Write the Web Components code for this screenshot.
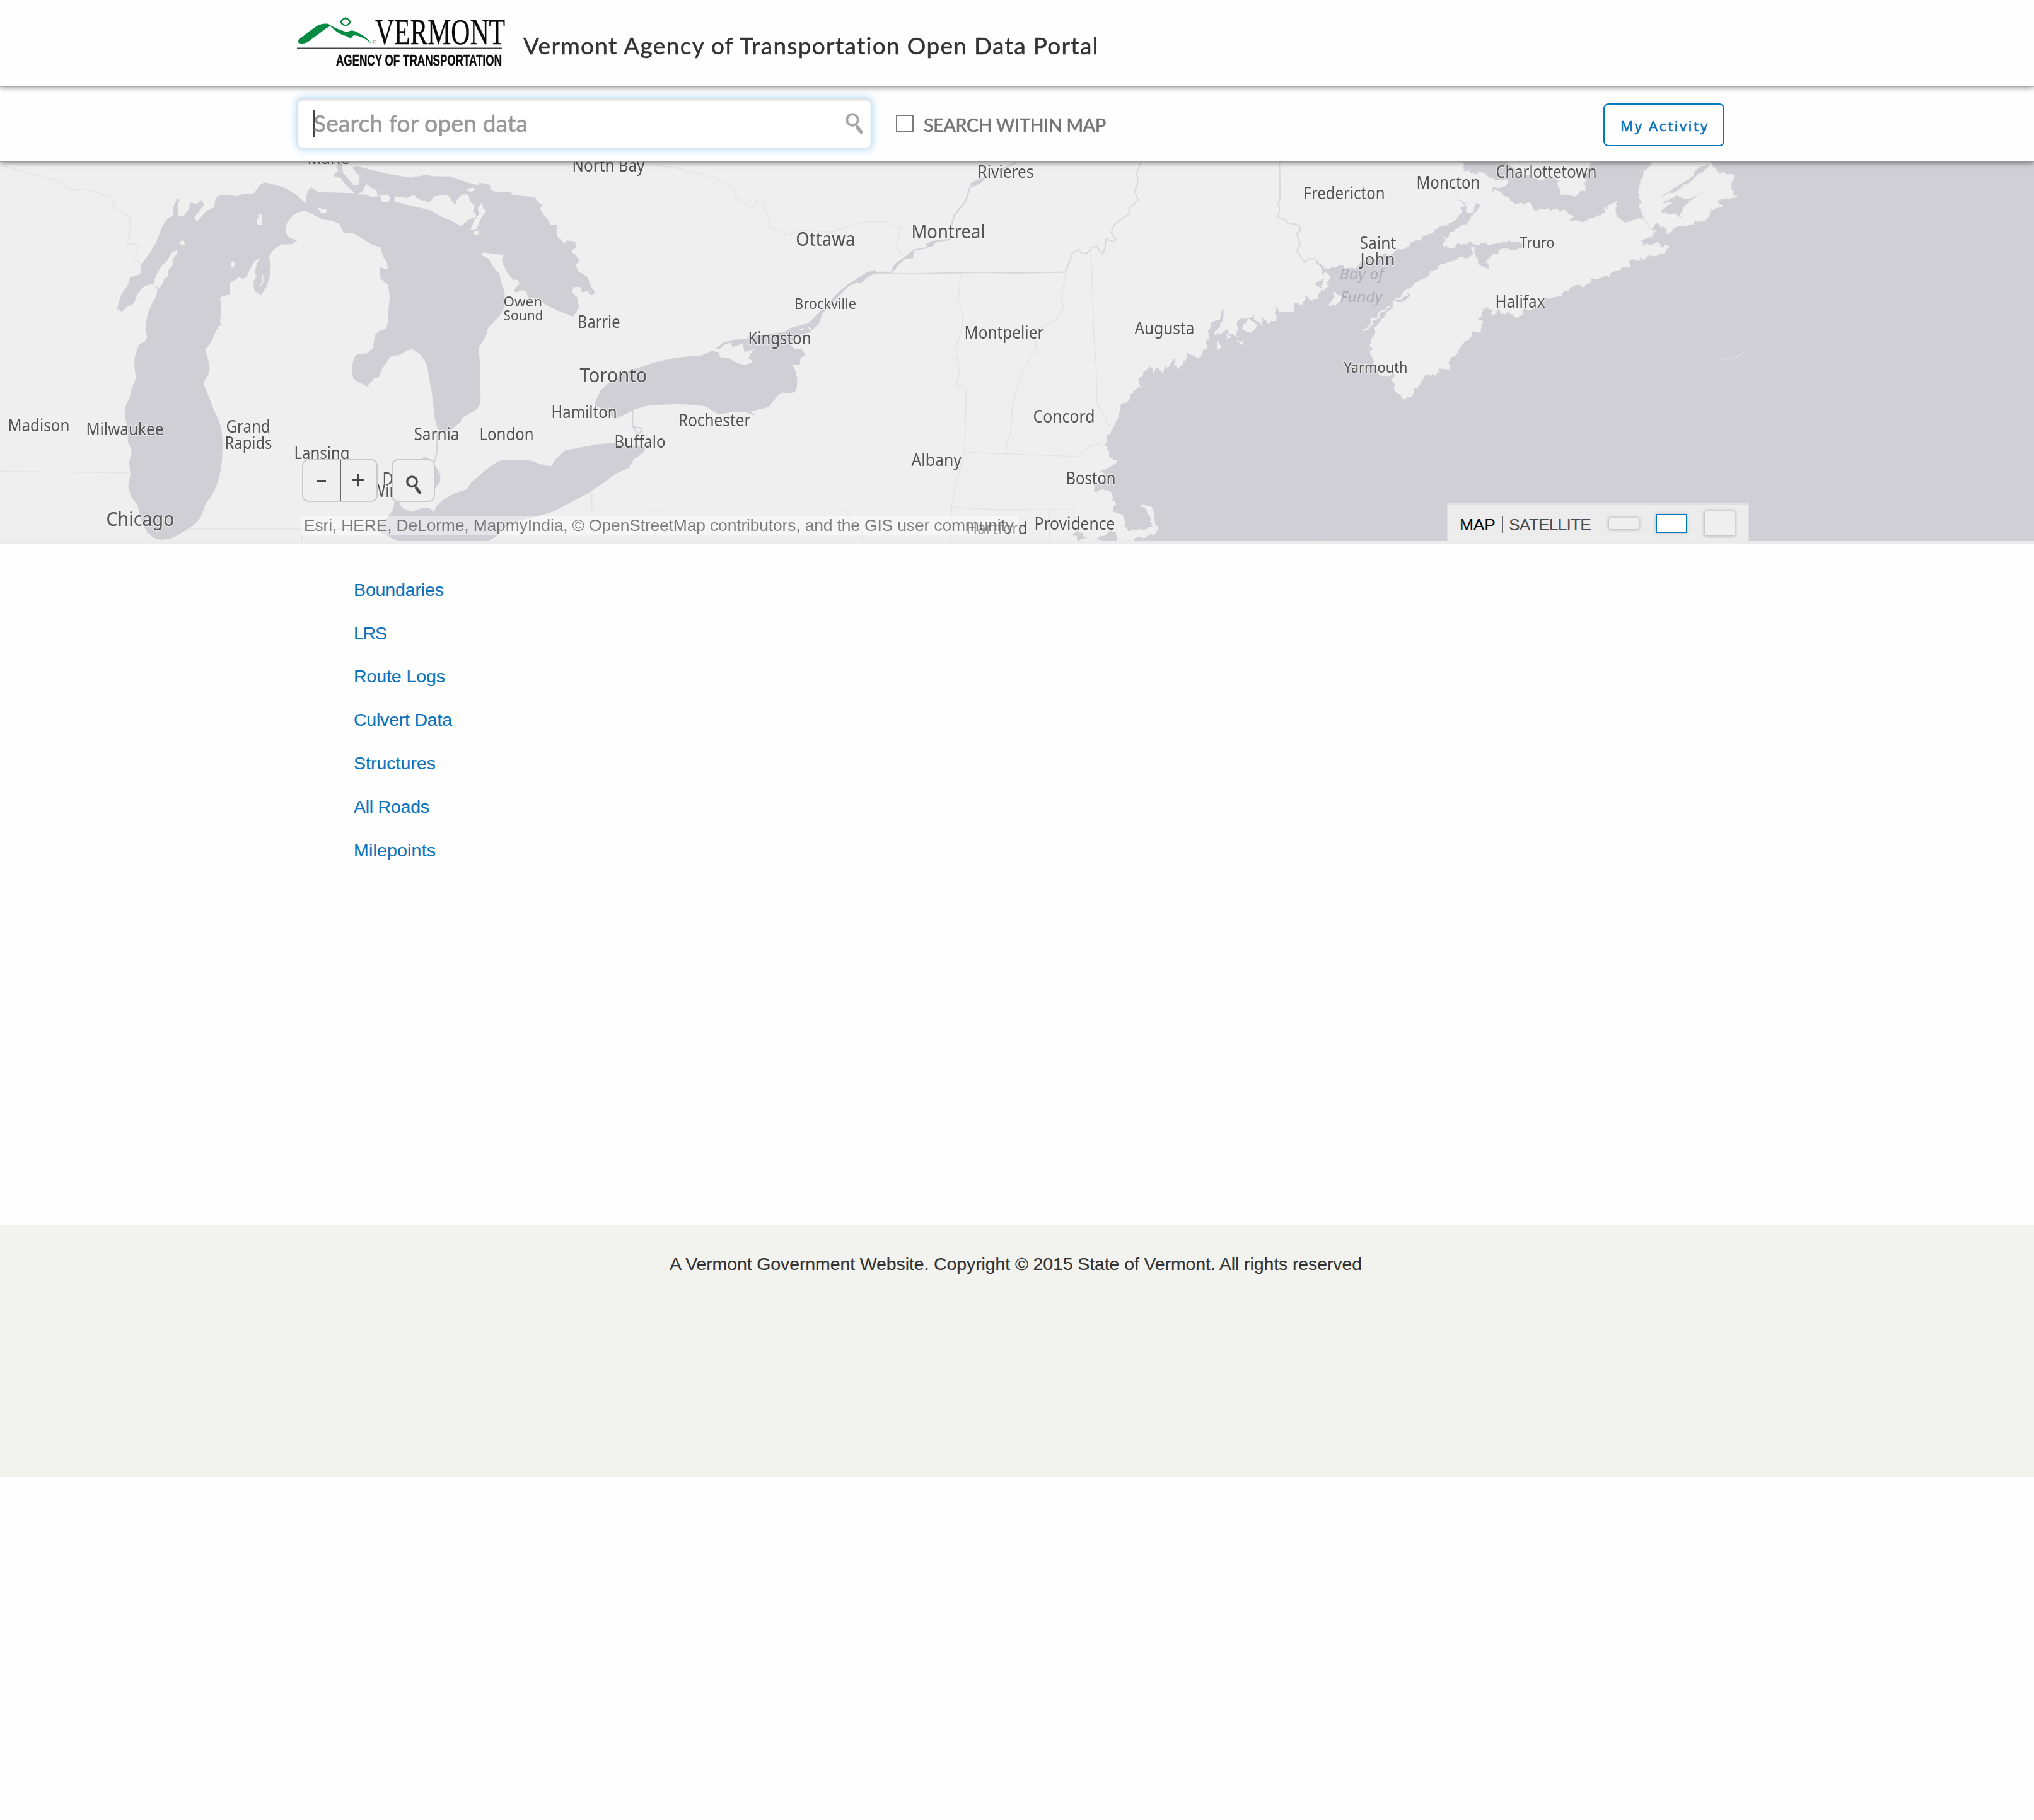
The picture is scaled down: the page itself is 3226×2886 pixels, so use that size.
<!DOCTYPE html>
<html lang="en">
<head>
<meta charset="utf-8">
<title>Vermont Agency of Transportation Open Data Portal</title>
<style>
  html, body { margin: 0; background: #fefefe; }
  body { font-family: "Liberation Sans", Arial, sans-serif; color: #333; }
</style>
</head>
<body>
<portal-page></portal-page>

<script>
/* Text set to an exact width by tracking. */
class FitText extends HTMLElement {
  constructor() {
    super();
    this.attachShadow({ mode: 'open' }).innerHTML =
      '<style>:host{display:block;white-space:nowrap;width:max-content}</style><slot></slot>';
  }
  connectedCallback() {
    const target = parseFloat(this.getAttribute('width'));
    const n = this.textContent.length - 1;
    this.style.letterSpacing = '0';
    const w = this.getBoundingClientRect().width;
    const s = (target - w) / n;
    this.style.letterSpacing = s + 'px';
    this.style.marginRight = -s + 'px';
  }
}

class AgencyLogo extends HTMLElement {
  constructor() {
    super();
    this.attachShadow({ mode: 'open' }).innerHTML = `
<style>:host{display:block;width:334px;height:86px}svg{display:block}</style>
<svg width="334" height="86" viewBox="470 24 334 86">
  <g transform="translate(440,0) scale(.4464,.3333)" fill="#078a42">
    <path d="M75,203 Q70,190 88,176 L112,150 L140,124 Q158,110 180,113 L190,122 L172,136 L150,158 L122,185 Q106,207 84,208 Z"/>
    <path d="M180,114 Q205,135 232,146 Q250,155 258,146 Q276,144 292,160 Q318,178 335,209 Q312,182 288,172 Q270,166 268,172 L260,184 L244,172 Q215,162 186,122 Z"/>
    <ellipse cx="242" cy="104" rx="15" ry="16" fill="none" stroke="#078a42" stroke-width="6.5"/>
    <path d="M237,89 L240,80 L244,87 L251,83 L250,92 Z"/>
  </g>
  <text x="590.5" y="70" font-size="9" font-family="Liberation Sans, sans-serif" fill="#555">®</text>
  <text x="595" y="69.5" font-size="58" textLength="206" lengthAdjust="spacingAndGlyphs" font-family="Liberation Serif, serif" fill="#0a0a0a" stroke="#0a0a0a" stroke-width=".4">VERMONT</text>
  <rect x="471" y="75.5" width="325" height="2.2" fill="#444"/>
  <text x="533" y="103.5" font-size="24.5" font-weight="700" textLength="263" lengthAdjust="spacingAndGlyphs" font-family="Liberation Sans, sans-serif" fill="#0a0a0a" stroke="#0a0a0a" stroke-width=".5">AGENCY OF TRANSPORTATION</text>
</svg>`;
  }
}

class SiteHeader extends HTMLElement {
  constructor() {
    super();
    this.attachShadow({ mode: 'open' }).innerHTML = `
<style>
:host{display:flex;align-items:flex-start;box-sizing:border-box;height:136px;padding:24px 0 0 470px;background:#fefefe;
 position:relative;z-index:3;box-shadow:0 1.5px 0 #a2a2a2,0 2px 9px rgba(0,0,0,.5)}
h1{margin:24px 0 0 26px;font:400 37px/48px Lato,sans-serif;color:#333;-webkit-text-stroke:.5px #333}
</style>
<agency-logo></agency-logo>
<h1><fit-text width="912">Vermont Agency of Transportation Open Data Portal</fit-text></h1>`;
  }
}

class MagnifierIcon extends HTMLElement {
  constructor() {
    super();
    this.attachShadow({ mode: 'open' }).innerHTML = `
<style>:host{display:block;width:30px;height:34px}svg{display:block;width:100%;height:100%}</style>
<svg viewBox="0 0 30 34" fill="none" stroke="currentColor" stroke-linecap="round">
<circle cx="11" cy="11" r="8.8" stroke-width="3.8"/><path d="M16.5,19.5 L18,21.5" stroke-width="3.2"/><path d="M19,23 L25,30.5" stroke-width="5.4"/></svg>`;
  }
}

class SearchBar extends HTMLElement {
  constructor() {
    super();
    this.attachShadow({ mode: 'open' }).innerHTML = `
<style>
:host{display:flex;align-items:flex-start;box-sizing:border-box;height:120px;padding:20px 491px 0 471px;background:#fefefe;
 position:relative;z-index:2;box-shadow:0 1px 0 #999,0 2px 8px rgba(0,0,0,.5)}
.box{display:flex;box-sizing:border-box;width:912px;height:80px;border:2px solid #e0e2e6;border-radius:8px;background:#fff;
 padding:15px 10px 0 24px;box-shadow:0 0 14px #a9d6f8,inset 0 2px 3px rgba(0,0,0,.08);align-items:flex-start}
.caret{width:2px;height:44px;background:#444;margin-right:-2px;margin-top:1px}
.ph{font:400 37px/44px Lato,sans-serif;color:#999;-webkit-text-stroke:.7px #999}
magnifier-icon{margin:6px 0 0 auto;color:#a6a6a6}
.check{box-sizing:border-box;width:28px;height:28px;border:2px solid #7a7a7a;background:#fff;margin:26px 0 0 38px}
.lab{font:400 28.5px/34px Lato,sans-serif;color:#757575;-webkit-text-stroke:.7px #757575;margin:25px 0 0 16px}
.act{display:flex;justify-content:center;align-items:center;box-sizing:border-box;width:192px;height:68px;border:2px solid #0079c1;border-radius:8px;
 margin:8px 0 0 auto;font:400 22.5px/30px "Open Sans",sans-serif;color:#0b74bc;-webkit-text-stroke:.7px #0b74bc;padding-top:4px}
</style>
<div class="box"><div class="caret"></div><div class="ph"><fit-text width="340">Search for open data</fit-text></div><magnifier-icon></magnifier-icon></div>
<div class="check"></div><div class="lab"><fit-text width="289">SEARCH WITHIN MAP</fit-text></div>
<div class="act"><fit-text width="138">My Activity</fit-text></div>`;
  }
}

/* [text, left, right, baseline, size] */
const LABELS = [
  ['Marie',489,554,3.5,27],['Madison',14,110,428,27],['Milwaukee',138,259,434,27],['Grand',360,428,430,27],['Rapids',358,431,455.5,27],
  ['Lansing',468,554,472,27],['Chicago',170,276,577.6,30.5],['Detroit',608,684,513,27],['Windsor',590,684,532,27],
  ['North Bay',909,1022,15.7,27],['Owen',800,859.6,230,22.5],['Sound',800,861,252,22.5],['Barrie',917.6,983,264,27],
  ['Toronto',921,1026,349.5,30.5],['Hamilton',876,978,406.5,27],['Sarnia',658,728,441.6,27],['London',762,846,441.6,27],
  ['Buffalo',976,1055,453.5,27],['Rivieres',1552,1639,25.6,27],['Ottawa',1263.7,1356,133.6,30.5],['Montreal',1447,1562,121.7,30.5],
  ['Brockville',1261.6,1357.5,234,23],['Kingston',1188,1286,290,27],['Montpelier',1531,1655,280.5,27],['Rochester',1077.5,1190,420,27],
  ['Albany',1447,1524.5,482.7,27],['Hartford',1534,1629,591,27],['Concord',1640,1736,414,27],['Augusta',1801,1894,274,27],
  ['Boston',1692,1769,512,27],['Providence',1642,1768,584,27],['Fredericton',2069,2196,60,27],['Saint',2158,2214,138.5,27],
  ['John',2159,2212,165,27],['Yarmouth',2133,2232,334.5,23.5],['Moncton',2248,2347,43.4,27],['Charlottetown',2374,2532,26.4,27],
  ['Truro',2411.6,2465,137,23.5],['Halifax',2373,2450,231.6,27]
];
const SEA_LABELS = [['Bay of',2126,2194,187,23.5],['Fundy',2127,2192,222.5,23.5]];

class RegionMap extends HTMLElement {
  constructor() {
    super();
    const label = ([t, x0, x1, y, s]) =>
      `<text x="${x0 - 1.5}" y="${y}" font-size="${s}" textLength="${x1 - x0 + 2}" lengthAdjust="spacingAndGlyphs">${t}</text>`;
    this.attachShadow({ mode: 'open' }).innerHTML = `
<style>
:host{display:block;height:602px;overflow:hidden;background:#efefef}
svg{display:block}
.w{fill:#d0cfd5}.l{fill:#efefef}
.b1{fill:none;stroke:#d9d9db;stroke-width:5}.b2{fill:none;stroke:#e4e4e6;stroke-width:4}.r{fill:none;stroke:#d4d3d8;stroke-width:6}
text{font-family:"Noto Sans","Open Sans",sans-serif;fill:#545454;paint-order:stroke;stroke:#f1f1f1;stroke-opacity:.75;stroke-width:2.5px}
.sea text{fill:#aeadb4;font-style:italic;stroke:none}
</style>
<svg width="3226" height="602" viewBox="0 0 3226 602">
<defs><filter id="coast" filterUnits="userSpaceOnUse" x="-20" y="-20" width="3266" height="642">
<feTurbulence type="fractalNoise" baseFrequency=".09" numOctaves="2" seed="4" result="n"/>
<feDisplacementMap in="SourceGraphic" in2="n" scale="13" xChannelSelector="R" yChannelSelector="G"/></filter></defs>

<!-- Lake Michigan -->
<g transform="translate(0,-6) scale(.40816,.39541)">
<path class="b2" d="M0,30 L110,62 L220,92 L280,128 L345,130 L440,160 L443,200 L470,212 L505,240 L508,290 L492,345 L540,350 L525,400 L548,430 M0,1258 L500,1264 M568,1500 V1545 M740,1490 H1640 M1175,1490 V1545"/>
<path class="w" d="M565,1490 C585,1530 630,1545 680,1520 C720,1495 765,1475 785,1430 L800,1385 C830,1350 850,1310 860,1235 C866,1190 866,1130 860,1090 C850,1040 830,1020 820,980 C808,950 800,930 790,905 C800,880 818,865 814,840 C812,815 805,800 797,768 C815,755 825,730 835,705 L850,675 L863,672 L855,662 L860,605 L855,560 L893,548 L895,500 L915,490 L928,480 L945,487 L960,475 L970,450 L990,415 L1010,403 L998,425 L990,465 L998,478 L985,495 L988,535 L1015,550 L1035,520 L1050,470 L1052,430 L1046,395 Q1060,365 1095,348 L1135,347 L1155,332 L1125,322 Q1108,310 1110,275 Q1118,250 1145,225 L1185,212 L1230,235 L1220,185 L1190,185 L1150,148 L1105,120 Q1060,105 1035,100 Q1010,100 1000,125 L985,145 L945,145 L925,155 L870,148 Q840,150 835,175 L832,200 L800,215 L765,258 L755,240 L792,190 L785,168 L765,185 L738,180 L735,205 L715,232 L692,238 L690,195 L698,168 L687,165 L672,205 L675,230 Q645,245 636,265 L625,290 L605,345 L580,385 L548,430 L545,468 L505,480 L495,515 L470,550 L457,600 L452,606 L475,618 L490,600 L520,585 L535,545 L560,515 L598,505 L612,530 L605,560 C580,600 570,630 565,690 L572,720 L562,738 L540,750 C525,790 520,810 523,840 L528,885 L510,930 L505,960 L488,995 L486,1040 L495,1080 L497,1140 L512,1175 L502,1220 L507,1270 L498,1320 L510,1360 L535,1395 L550,1460 Z"/>
<path class="l" d="M600,490 L612,460 L628,435 L650,412 L668,380 L690,370 L688,385 L670,408 L672,430 L655,450 L650,480 L638,485 L632,505 L618,525 L600,510Z"/>
<ellipse class="l" cx="709" cy="342" rx="9" ry="10"/><ellipse class="l" cx="905" cy="428" rx="7" ry="13"/>
<path class="l" d="M1010,220 L1020,235 L1018,268 L1005,272 L996,262 Z"/>
<path d="M1020,470 V500 L1010,515" fill="none" stroke="#efefef" stroke-width="5"/>
</g>

<!-- Lake Huron, Georgian Bay, Lake Erie -->
<g transform="translate(440,-6) scale(.40816,.39541)">
<path class="b2" d="M1055,1430 V1545 M1222,1345 V1417 H1500 M95,1490 V1545"/>
<path class="w" d="M108,190 L112,150 L128,118 L158,138 L300,142 L262,105 L245,80 L222,78 L220,65 L235,55 L230,20 L250,22 L255,60 L275,85 L295,110 L315,108 L320,75 L290,40 L310,35 L350,45 L430,65 L520,80 L580,68 L600,74 L670,75 L740,100 L780,110 L785,100 L825,108 L830,130 L850,138 L905,136 L915,150 L1000,158 L1015,180 L1030,190 L1020,205 L1035,230 L1050,245 L1060,268 L1085,270 L1085,315 L1120,345 L1120,332 L1155,335 L1163,360 L1145,370 L1148,385 L1160,390 L1172,415 L1160,430 L1168,455 L1185,465 L1205,480 L1220,520 L1237,543 L1215,550 L1205,535 L1185,540 L1175,518 L1150,520 L1145,540 L1165,560 L1172,600 L1150,637 L1100,618 L1050,595 L1020,570 L975,560 L965,535 L925,540 L920,530 L940,505 L935,490 L915,490 L895,465 L880,435 L872,410 L880,390 L800,380 L792,390 L820,405 L840,440 L862,465 L870,500 L883,540 L883,600 L860,640 L820,680 L808,720 L782,762 C786,800 789,850 788,900 L790,980 L775,1010 L722,1040 L710,1062 L670,1095 L640,1098 L622,1085 L612,1050 L605,990 L600,940 L588,880 Q585,840 575,820 Q550,772 520,768 L500,775 L480,790 L440,798 L425,820 L405,850 L395,880 L375,885 L350,918 L325,905 Q285,890 290,850 Q292,800 310,790 L345,785 L370,765 L380,710 L395,695 L420,688 Q430,680 430,620 L437,560 L430,510 L400,485 L398,440 L430,448 L425,420 L410,395 L400,360 L370,350 L330,325 L295,303 L258,303 L240,265 L210,252 L175,248 L130,222 Z"/>
<g class="l"><path d="M455,155 L505,162 L530,150 L545,165 L590,180 L610,155 L660,148 L680,175 L690,192 L700,165 L720,148 L742,148 L748,175 L765,190 L760,215 L775,235 L740,250 L715,275 L690,260 L640,238 L595,212 L550,200 L500,188 L455,175Z"/>
<path d="M398,150 L430,148 L438,162 L430,180 L405,176Z"/><path d="M312,148 L330,135 L345,105 L362,118 L385,132 L390,155 L365,158 L340,148Z"/>
<path d="M155,200 L175,205 L190,208 L190,222 L170,222Z"/><path d="M795,178 L800,205 L812,212 L790,245 L775,285 L750,290 L765,250 L785,225 L778,205 Z"/><circle cx="773" cy="302" r="9"/>
<path d="M735,125 L760,120 L770,130 L748,138Z"/><path d="M918,545 L950,532 L968,540 L962,575 L930,570Z"/></g>
<path class="r" d="M622,1100 L620,1180 L610,1220"/>
<path class="w" d="M540,1225 L570,1200 L600,1212 L625,1255 L633,1270 L632,1300 L615,1325 L560,1330 Z"/>
<path class="r" d="M1380,1015 L1380,1075 L1400,1110 M1385,1080 L1412,1084 L1417,1098 L1395,1110"/>
<path class="w" d="M608,1430 Q610,1400 640,1375 Q680,1345 735,1330 L755,1300 L825,1240 Q860,1212 880,1212 L970,1212 Q1000,1218 1030,1232 L1063,1238 L1080,1210 L1120,1172 L1150,1168 L1240,1150 L1310,1143 L1350,1155 L1430,1160 L1425,1180 L1385,1210 L1365,1245 L1320,1265 L1210,1345 L1070,1420 L990,1445 L940,1455 L880,1485 L850,1520 L820,1538 L465,1538 L425,1515 L395,1502 L395,1470 L430,1440 L450,1410 L455,1378 L472,1380 L485,1405 L520,1420 Q570,1400 590,1405 Q605,1415 608,1430Z"/>
</g>

<!-- Lake Ontario, St. Lawrence, New York and New England borders -->
<g transform="translate(1040,-6) scale(.40816,.39541)">
<path class="b2" d="M0,30 L80,42 L150,60 L240,85 L300,125 L310,160 L380,205 L390,172 L415,180 L440,240 L445,280 L515,312 L560,290 L680,300 L730,280 L835,255 L890,258 L953,280 L935,360 L965,395 M1185,470 L1175,580 L1195,630 L1188,690 L1165,770 L1180,860 L1167,920 L1188,905 L1207,930 L1200,1180 L1180,1260 L1150,1390 L1145,1545 M1587,460 L1594,490 L1572,550 L1584,600 L1552,655 L1472,690 L1478,760 L1410,890 L1385,1000 L1380,1100 L1362,1160 L1375,1187 M1200,1182 L1400,1190 L1640,1198 L1680,1160 L1740,1140 M1150,1402 L1300,1410 L1622,1412 L1630,1450 M1530,1410 V1545 M-30,1417 H740 L800,1500 L805,1545"/>
<path class="b1" d="M850,464 L1000,466 L1270,460 L1400,463 L1592,459"/>
<path class="r" d="M855,460 L915,460 L940,430 L1000,372 L1050,362 L1090,335 L1145,328 L1150,270 L1160,230 L1205,175 L1225,105 L1260,90 L1320,60 L1400,20"/>
<path class="w" d="M917,450 L930,425 L965,400 L1002,375 L1000,403 L970,405 L940,430 L930,452Z M1225,122 L1230,98 L1262,85 L1290,75 L1265,100Z M1045,350 L1070,335 L1095,330 L1070,360Z"/>
<path class="w" d="M-240,990 L-215,935 L-185,905 L-150,880 L-110,855 L-60,840 L0,820 L80,802 L180,793 L215,775 L245,780 L250,800 L285,805 L310,820 L345,832 L380,818 L360,805 L375,775 L390,765 L345,780 L338,745 L300,760 L290,742 L270,748 L245,770 L235,765 L260,743 L300,730 L350,728 L370,715 L500,700 L520,685 L595,662 L635,620 L700,548 L750,505 L820,460 L850,450 L862,462 L830,475 L795,505 L785,500 L750,515 L700,568 L648,625 L635,665 L600,700 L560,712 L520,745 L540,770 L565,765 L582,790 L562,805 L560,832 L528,830 Q545,850 545,865 Q555,900 545,935 Q530,948 490,942 Q470,955 440,1000 L400,1010 L370,1018 L385,1035 L350,1022 L310,1018 L245,1030 L225,1018 Q200,995 160,992 L80,988 L0,992 Q-60,995 -100,1020 L-160,1050 L-190,1020Z"/>
<path d="M560,690 L575,685 M595,680 L605,690" stroke="#efefef" stroke-width="6"/>
</g>

<!-- Maine border -->
<g transform="translate(1600,-6) scale(.40816,.39541)">
<path class="b2" d="M318,365 L325,520 L330,700 L340,850 L342,985 L375,1040 L382,1065 L402,1080"/>
<path class="b1" d="M220,459 L240,405 L245,385 L270,368 L285,385 L305,382 L320,362 L342,355 L365,390 L375,355 L378,325 L405,338 L416,328 L398,300 L410,268 L440,245 L470,225 L470,200 L502,170 L490,135 L502,95 L497,60 L515,15 M1052,10 L1054,165 L1046,180 L1053,205 L1046,240 L1065,245 L1085,262 L1130,270 L1132,295 L1118,305 L1132,345 L1120,375 L1150,420 L1165,405 L1190,405 L1215,440"/>
</g>

<!-- Atlantic coast -->
<g filter="url(#coast)">
<g transform="translate(1600,-6) scale(.40816,.39541)">
<path class="w" d="M460,1600 L460,1535 L500,1525 L565,1518 L575,1490 L568,1450 L555,1410 L530,1390 L503,1393 L512,1404 L535,1412 L552,1450 L553,1482 L520,1492 L470,1498 L445,1480 L440,1440 L405,1420 L413,1395 L400,1350 L385,1335 L330,1330 L335,1305 L372,1275 L365,1250 L420,1220 L405,1205 L390,1205 L378,1150 L385,1115 L412,1070 L425,1030 L432,998 L475,965 L480,940 L510,925 L505,880 L550,835 L560,865 L575,840 L600,875 L610,830 L620,850 L640,800 L650,845 L680,825 L695,780 L735,805 L765,760 L785,660 L820,650 L830,600 L836,650 L815,665 L805,710 L850,690 L880,715 L885,660 L905,640 L915,655 L950,630 L985,680 L990,635 L1005,665 L1035,650 L1045,590 L1060,625 L1100,615 L1110,585 L1145,595 L1150,555 L1180,580 L1225,530 L1190,500 L1225,490 L1190,400 L1225,450 L1280,450 V1600Z"/>
<path class="w" d="M245,1510 L270,1495 L300,1520 L265,1538Z M350,1528 L400,1495 L415,1505 L410,1545 L360,1545Z"/>
<g class="l"><circle cx="938" cy="678" r="25"/><path d="M805,730 L825,755 L820,775 L808,765Z M845,700 L865,720 L850,735Z M890,735 L915,730 L905,748Z M860,760 L868,770 L860,780Z"/></g>
</g>
<g transform="translate(2100,-6) scale(.44643,.39541)">
<rect class="w" x="0" y="-30" width="2600" height="1650"/>
<g class="l">
<path d="M-15,-30 H470 L500,55 L570,65 L600,85 L660,95 L640,112 L595,125 L635,145 L650,165 L680,185 L725,180 L745,210 L795,205 L850,212 L890,235 L870,250 L920,262 L980,230 L1030,175 L1042,240 L1075,262 L1130,238 L1150,270 L1175,295 L1170,320 L1125,330 L1130,348 L1220,350 L1228,362 L1190,395 L1150,390 L1140,408 L1090,410 L1085,435 L1030,455 L1010,470 L950,490 L920,520 L905,505 L860,535 L840,560 L800,560 L770,600 L710,610 L705,635 L640,628 L620,600 L600,635 L590,605 L560,605 L550,650 L568,660 L560,700 L530,700 L515,740 L490,745 L480,780 L450,800 L440,850 L415,840 L390,880 L370,860 L345,890 L335,930 L320,920 L310,955 L285,970 L260,945 L240,870 L205,880 L175,830 L165,750 L180,690 Q195,650 240,605 L245,575 L330,500 L420,430 L470,410 L535,385 L525,362 L540,362 L545,420 L580,450 L585,462 L575,420 L580,400 Q600,380 640,372 L700,365 L700,345 L640,335 L620,345 L540,350 L525,345 L470,345 L460,362 L420,350 L430,320 L500,265 L550,200 L555,185 L535,190 L518,232 L505,225 L507,190 L470,145 L500,195 L470,245 L445,265 L400,290 L350,320 L300,355 L200,400 L130,415 L110,445 L50,435 L20,445 L-15,420 Z"/>
<path d="M650,15 L680,-30 H950 L940,60 L915,75 L935,130 L900,150 L850,148 L820,110 L840,90 L770,85 L690,60Z"/>
<path d="M1190,-30 L1140,60 L1115,120 L1120,170 L1130,235 L1165,285 L1180,262 L1210,285 L1225,305 L1245,275 L1280,280 L1370,235 L1370,215 L1415,200 L1400,175 L1470,155 L1445,125 L1460,70 L1400,60 L1380,20 L1330,-30Z"/>
<path d="M22,592 L35,535 L60,560 L50,585Z"/><path d="M0,450 L18,470 L10,520 L-5,530Z"/>
</g>
<path d="M140,702 Q170,640 235,595" fill="none" stroke="#efefef" stroke-width="9"/>
<path class="w" d="M1195,225 L1215,200 L1240,180 L1205,175 L1250,155 L1290,170 L1345,140 L1275,200 L1270,240 L1250,215Z M1195,155 L1285,95 L1350,25 L1365,35 L1290,110Z M250,575 L310,540 L300,560 L258,590Z"/>
</g></g>
<path d="M2728,312 Q2750,318 2766,302" fill="none" stroke="#dcdce0" stroke-width="2"/>
<g class="sea">${SEA_LABELS.map(label).join('')}</g>
<g>${LABELS.map(label).join('')}</g>
</svg>`;
  }
}

class ZoomControls extends HTMLElement {
  constructor() {
    super();
    this.attachShadow({ mode: 'open' }).innerHTML = `
<style>
:host{display:flex;gap:23px}
.z,.s{display:flex;box-sizing:border-box;height:68px;border:2px solid #c9c9cb;border-radius:10px;background:#efefef;overflow:hidden}
.z{width:120px}.s{width:69px;padding:24px 0 0 20px;margin-left:-1px}
.z span{flex:1;display:flex;justify-content:center;font:700 29px/62px "Liberation Sans",sans-serif;color:#444}
.z i{width:2px;background:#666;margin-right:-1px}
.z .plus{font-size:38px;font-weight:400;line-height:62px;-webkit-text-stroke:.4px #444}
magnifier-icon{color:#4d4d4d;width:28px;height:30px}
</style>
<div class="z"><span>–</span><i></i><span class="plus">+</span></div><div class="s"><magnifier-icon></magnifier-icon></div>`;
  }
}

class MapAttribution extends HTMLElement {
  constructor() {
    super();
    this.attachShadow({ mode: 'open' }).innerHTML = `
<style>:host{display:block;box-sizing:border-box;width:1138px;height:30px;padding-left:5px;background:rgba(255,255,255,.45);font:26.5px/31px "Liberation Sans",sans-serif;color:rgba(50,50,50,.62)}</style>
<fit-text width="1126">Esri, HERE, DeLorme, MapmyIndia, © OpenStreetMap contributors, and the GIS user community</fit-text>`;
  }
}

class BasemapToggle extends HTMLElement {
  constructor() {
    super();
    this.attachShadow({ mode: 'open' }).innerHTML = `
<style>
:host{display:flex;align-items:center;box-sizing:border-box;width:479px;height:60px;padding:5px 0 0 18px;background:#ececec;border:2px solid #dfdfe3;border-bottom:0;
 font:26.5px/32px "Liberation Sans",sans-serif;color:#4c4c4c}
.on{color:#000}.bar{width:2px;height:27px;background:#666;margin:0 9px 0 10px}
.b{box-sizing:border-box;background:#efefef;box-shadow:0 0 5px 1px #b0b0b0;border-radius:2px;margin-top:-3px}
.b1{width:47px;height:17px;margin-left:28px}.b2{width:50px;height:30px;margin-left:27px;background:#fff;border:2px solid #0079c1;border-radius:0;box-shadow:0 0 5px #bbb}
.b3{width:47px;height:38px;margin-left:28px}
</style>
<fit-text class="on" width="57">MAP</fit-text><span class="bar"></span><fit-text width="131">SATELLITE</fit-text>
<span class="b b1"></span><span class="b b2"></span><span class="b b3"></span>`;
  }
}

class MapPanel extends HTMLElement {
  constructor() {
    super();
    this.attachShadow({ mode: 'open' }).innerHTML = `
<style>
:host{display:block;position:relative;border-bottom:4px solid #ebebec;height:602px}
zoom-controls{position:absolute;left:479px;top:472px}
map-attribution{position:absolute;left:477px;top:562px}
basemap-toggle{position:absolute;left:2295px;top:542px}
</style>
<region-map></region-map>
<zoom-controls></zoom-controls>
<map-attribution></map-attribution>
<basemap-toggle></basemap-toggle>`;
  }
}

class TopicList extends HTMLElement {
  constructor() {
    super();
    this.attachShadow({ mode: 'open' }).innerHTML = `
<style>
:host{display:flex;flex-direction:column;box-sizing:border-box;height:1080px;padding:38.8px 0 0 561px;font:28.5px/68.8px "Liberation Sans",sans-serif;color:#0a73bb;-webkit-text-stroke:.2px #0a73bb}
</style>
${[['Boundaries',143],['LRS',53],['Route Logs',145],['Culvert Data',156],['Structures',130],['All Roads',120],['Milepoints',130]]
  .map(([t, w]) => `<fit-text width="${w}">${t}</fit-text>`).join('')}`;
  }
}

class SiteFooter extends HTMLElement {
  constructor() {
    super();
    this.attachShadow({ mode: 'open' }).innerHTML = `
<style>:host{display:block;box-sizing:border-box;height:400px;padding:46px 0 0 1062px;background:#f2f3ee;font:28.5px/32px "Liberation Sans",sans-serif;color:#333;-webkit-text-stroke:.2px #333}</style>
<fit-text width="1098">A Vermont Government Website. Copyright © 2015 State of Vermont. All rights reserved</fit-text>`;
  }
}

class PortalPage extends HTMLElement {
  constructor() {
    super();
    this.attachShadow({ mode: 'open' }).innerHTML = `
<style>:host{display:flex;flex-direction:column;width:3226px;height:2886px;overflow:hidden}</style>
<site-header></site-header><search-bar></search-bar><map-panel></map-panel><topic-list></topic-list><site-footer></site-footer>`;
  }
}

customElements.define('fit-text', FitText);
customElements.define('agency-logo', AgencyLogo);
customElements.define('magnifier-icon', MagnifierIcon);
customElements.define('site-header', SiteHeader);
customElements.define('search-bar', SearchBar);
customElements.define('region-map', RegionMap);
customElements.define('zoom-controls', ZoomControls);
customElements.define('map-attribution', MapAttribution);
customElements.define('basemap-toggle', BasemapToggle);
customElements.define('map-panel', MapPanel);
customElements.define('topic-list', TopicList);
customElements.define('site-footer', SiteFooter);
customElements.define('portal-page', PortalPage);
</script>
</body>
</html>
